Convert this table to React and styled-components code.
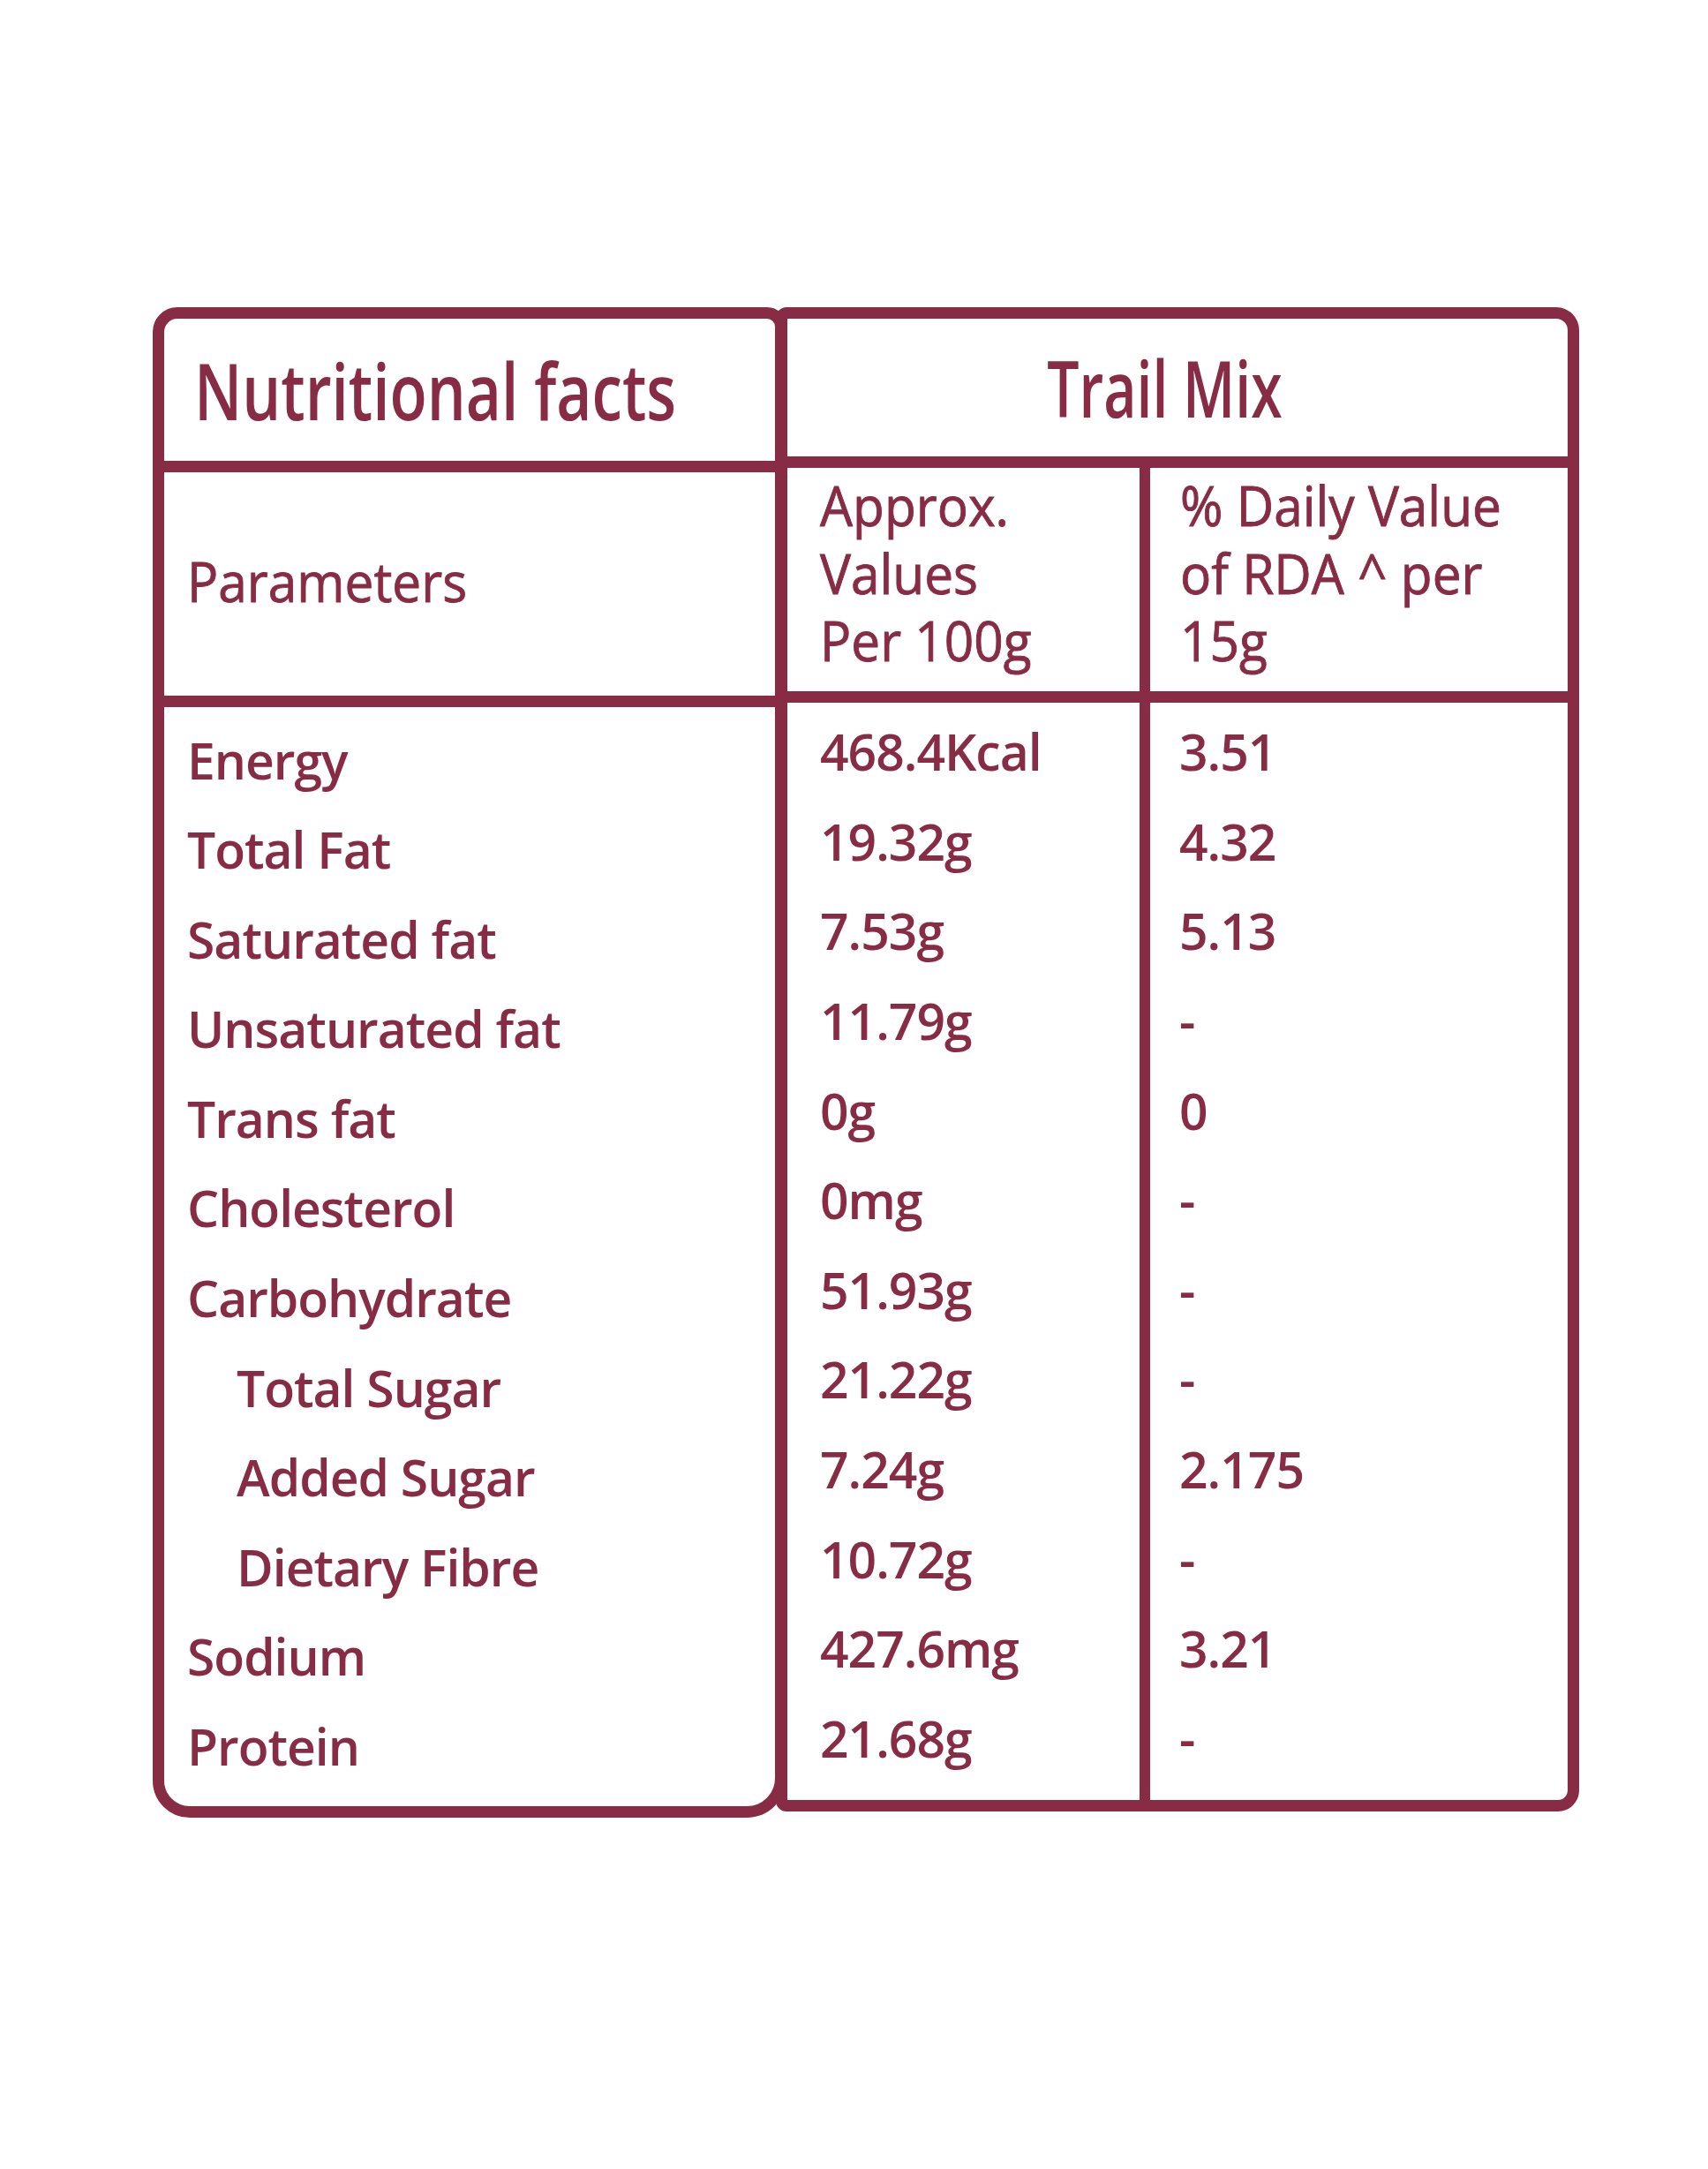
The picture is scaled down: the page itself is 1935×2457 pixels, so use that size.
import React from 'react';
import styled, { createGlobalStyle } from 'styled-components';

const C = '#872c44';
const LINE = 13;
const ROW = 101.6;

const Global = createGlobalStyle`
  html, body { margin: 0; padding: 0; background: #ffffff; }
  body { font-family: "Open Sans", "Noto Sans", sans-serif; color: ${C}; }
`;

const Page = styled.div`
  box-sizing: border-box;
  width: 1935px;
  min-height: 2457px;
  padding: 348px 0 0 173px;
  display: flex;
  align-items: flex-start;
  background: #ffffff;
`;

const Box = styled.div`
  box-sizing: border-box;
  width: ${(p) => p.$w}px;
  height: ${(p) => p.$h}px;
  margin-left: ${(p) => p.$ml || 0}px;
  border: ${LINE}px solid ${C};
  border-radius: ${(p) => p.$r};
  display: flex;
  flex-direction: column;
`;

const Header = styled.div`
  height: ${(p) => p.$h}px;
  flex: none;
  border-bottom: ${LINE}px solid ${C};
  display: flex;
  align-items: center;
  justify-content: ${(p) => (p.$center ? 'center' : 'flex-start')};
  padding: ${(p) => p.$pad || '0'};
`;

const Title = styled.h1`
  margin: 0;
  font-size: 88px;
  line-height: 88px;
  font-weight: 600;
  white-space: nowrap;
  color: ${C};
  transform: scaleX(${(p) => p.$sx});
  transform-origin: ${(p) => (p.$center ? 'center' : 'left')} center;
`;

const SubHeader = styled.div`
  height: 253px;
  flex: none;
  border-bottom: ${LINE}px solid ${C};
  display: flex;
`;

const SubCell = styled.div`
  box-sizing: border-box;
  width: ${(p) => (p.$w ? `${p.$w}px` : 'auto')};
  flex: ${(p) => (p.$w ? 'none' : '1')};
  border-right: ${(p) => (p.$divider ? `12px solid ${C}` : 'none')};
  display: flex;
  align-items: ${(p) => (p.$middle ? 'center' : 'flex-start')};
  padding: ${(p) => p.$pad};
`;

const SubText = styled.div`
  font-size: 63px;
  line-height: 76.5px;
  font-weight: 400;
  -webkit-text-stroke: 0.9px ${C};
  white-space: pre;
  color: ${C};
  transform: scaleX(0.93);
  transform-origin: left top;
`;

const Body = styled.div`
  flex: 1;
  display: flex;
  padding-top: ${(p) => p.$top}px;
`;

const Column = styled.div`
  box-sizing: border-box;
  width: ${(p) => (p.$w ? `${p.$w}px` : 'auto')};
  flex: ${(p) => (p.$w ? 'none' : '1')};
  border-right: ${(p) => (p.$divider ? `12px solid ${C}` : 'none')};
  padding-top: ${(p) => p.$pt || 0}px;
  display: flex;
  flex-direction: column;
`;

const Cell = styled.div`
  height: ${ROW}px;
  line-height: ${ROW}px;
  font-size: 57px;
  letter-spacing: -1px;
  font-weight: 600;
  white-space: nowrap;
  color: ${C};
  padding-left: ${(p) => p.$pl}px;
`;

const rows = [
  ['Energy', '468.4Kcal', '3.51'],
  ['Total Fat', '19.32g', '4.32'],
  ['Saturated fat', '7.53g', '5.13'],
  ['Unsaturated fat', '11.79g', '-'],
  ['Trans fat', '0g', '0'],
  ['Cholesterol', '0mg', '-'],
  ['Carbohydrate', '51.93g', '-'],
  ['Total Sugar', '21.22g', '-', true],
  ['Added Sugar', '7.24g', '2.175', true],
  ['Dietary Fibre', '10.72g', '-', true],
  ['Sodium', '427.6mg', '3.21'],
  ['Protein', '21.68g', '-'],
];

export default function App() {
  return (
    <>
      <Global />
      <Page>
        <Box $w={718} $h={1711} $r="28px 22px 45px 42px">
          <Header $h={161} $pad="0 0 0 34px">
            <Title $sx={0.787}>Nutritional facts</Title>
          </Header>
          <SubHeader>
            <SubCell $middle $pad="0 0 6px 26px">
              <SubText>Parameters</SubText>
            </SubCell>
          </SubHeader>
          <Body $top={9.5}>
            <Column>
              {rows.map(([label, , , indent]) => (
                <Cell key={label} $pl={indent ? 82 : 26}>
                  {label}
                </Cell>
              ))}
            </Column>
          </Body>
        </Box>
        <Box $w={910} $h={1704} $ml={-12} $r="12px 26px 24px 12px">
          <Header $h={156} $center $pad="0 30px 0 0">
            <Title $center $sx={0.73}>Trail Mix</Title>
          </Header>
          <SubHeader>
            <SubCell $w={411} $divider $pad="4px 0 0 37px">
              <SubText>{'Approx.\nValues\nPer 100g'}</SubText>
            </SubCell>
            <SubCell $pad="4px 0 0 34px">
              <SubText>{'% Daily Value\nof RDA ^ per\n15g'}</SubText>
            </SubCell>
          </SubHeader>
          <Body $top={0}>
            <Column $w={411} $divider $pt={5.2}>
              {rows.map(([label, value]) => (
                <Cell key={label} $pl={37}>
                  {value}
                </Cell>
              ))}
            </Column>
            <Column $pt={5.2}>
              {rows.map(([label, , dv]) => (
                <Cell key={label} $pl={33}>
                  {dv}
                </Cell>
              ))}
            </Column>
          </Body>
        </Box>
      </Page>
    </>
  );
}
